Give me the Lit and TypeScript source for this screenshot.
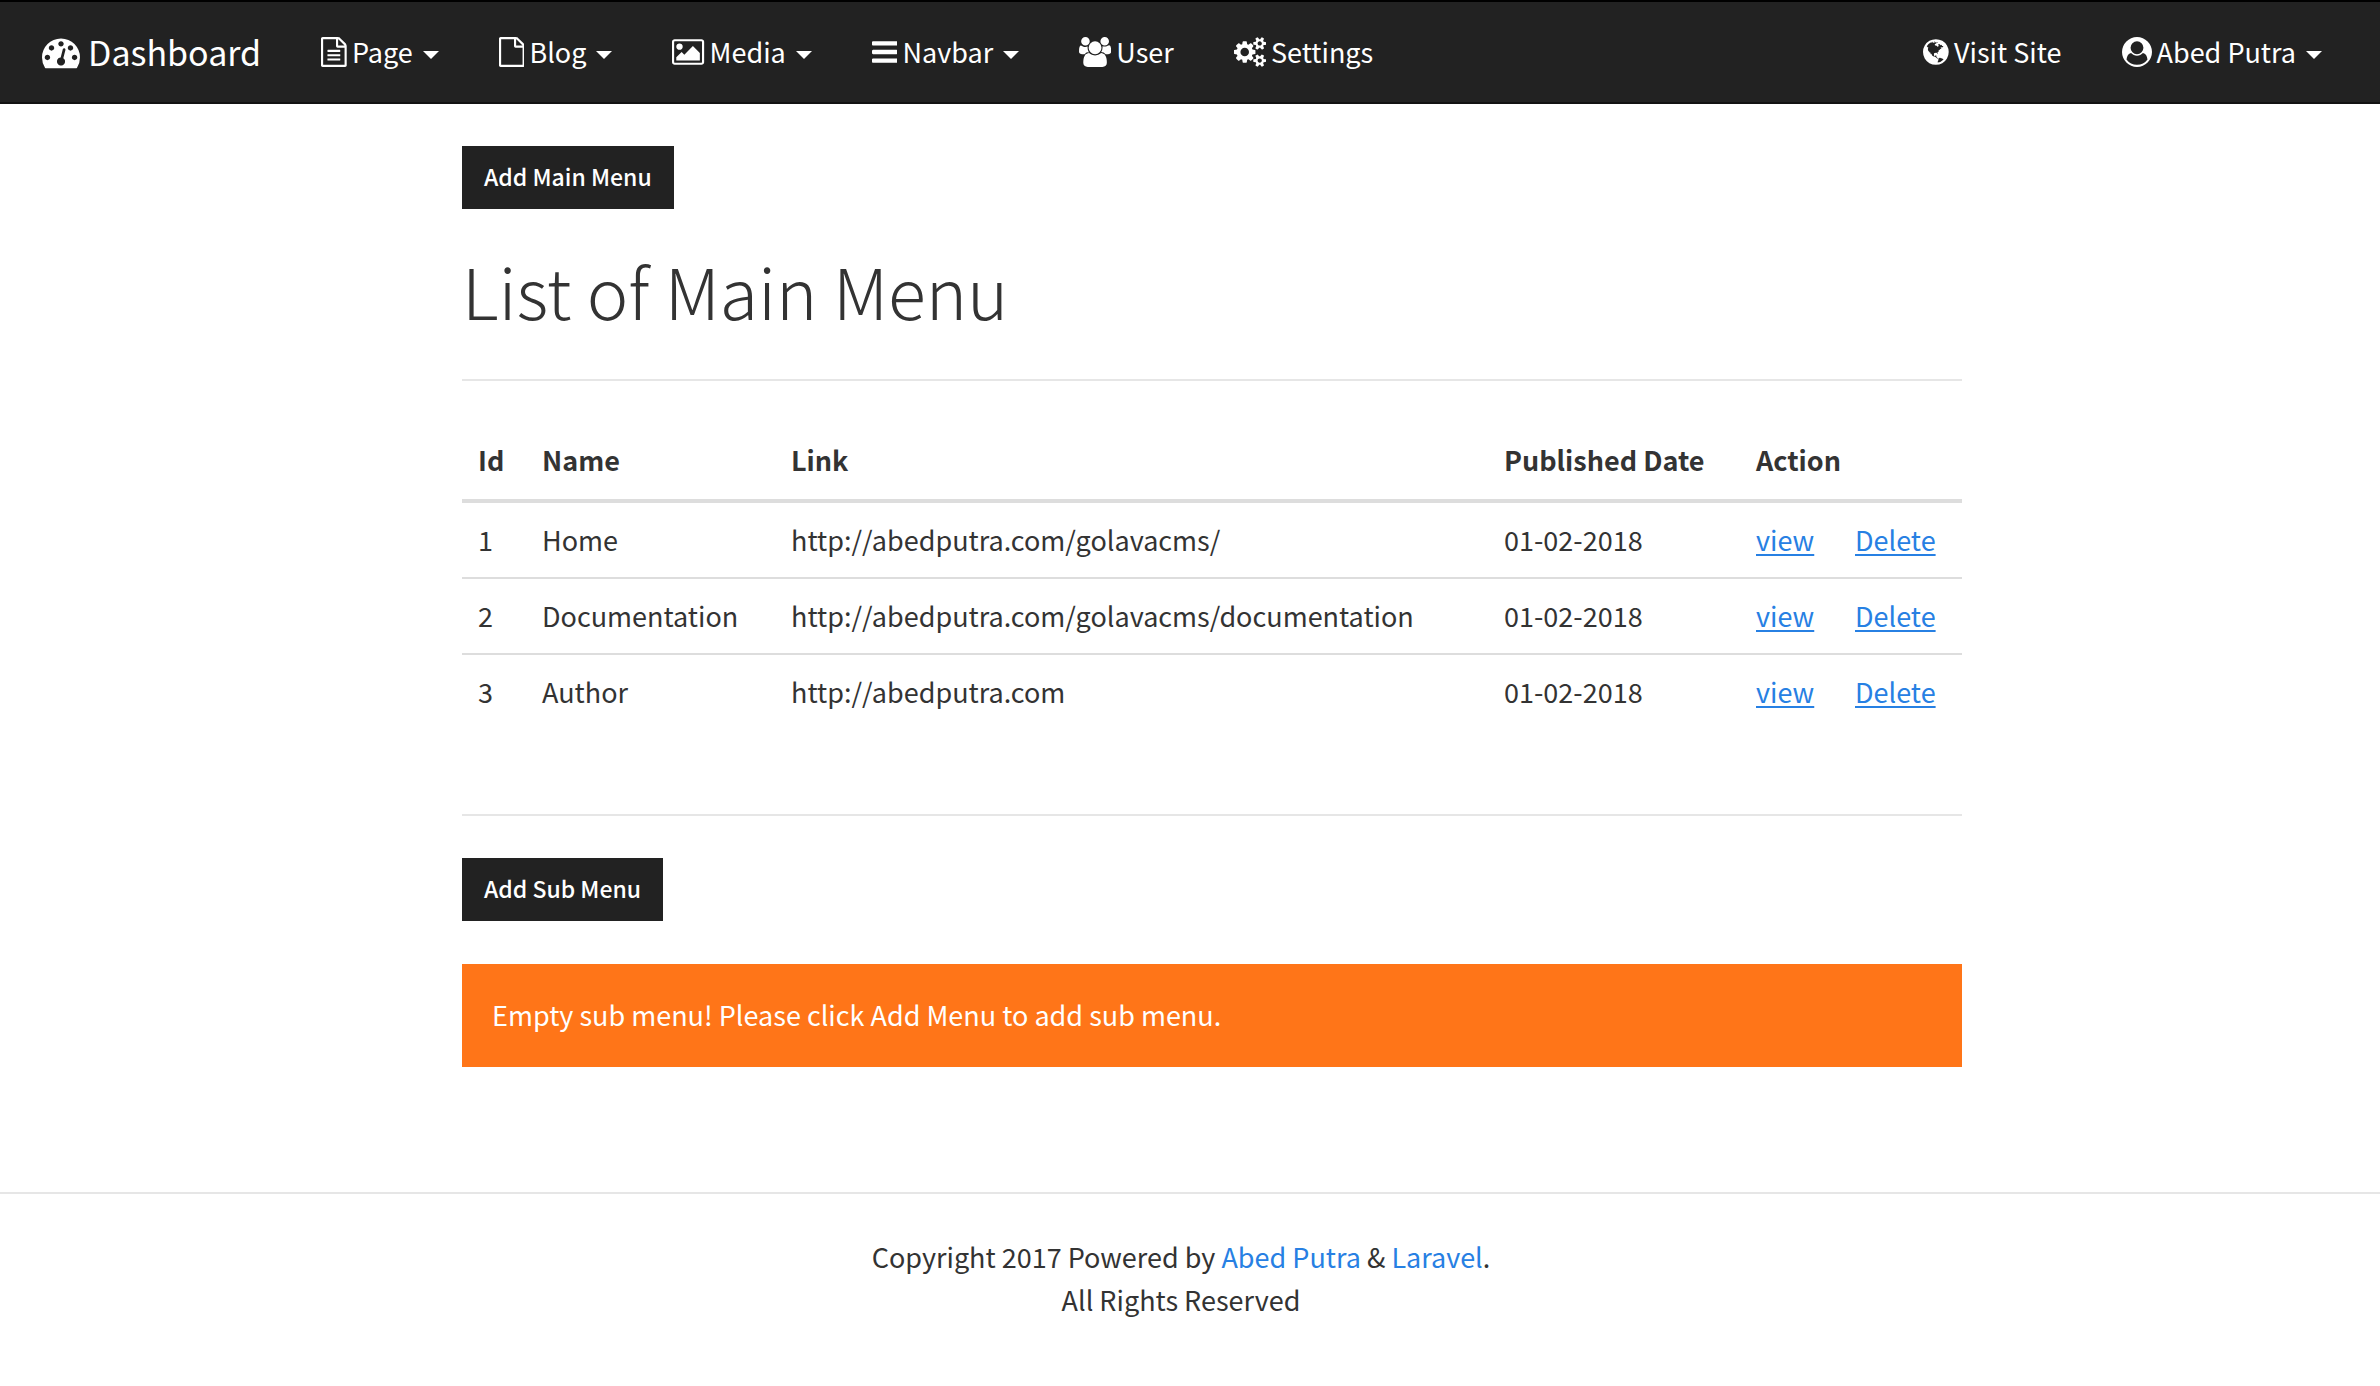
import { LitElement, html, css, svg } from "lit";
import { customElement, property } from "lit/decorators.js";

interface Glyph {
  box: string;
  path: string;
}

/* Glyphs share a 1792-unit em height; the box holds each one's own advance width. */
const GLYPHS: Record<string, Glyph> = {
  dashboard: {
    box: "0 0 1792 1792",
    path: "M384 1152q0-53-37.5-90.5t-90.5-37.5-90.5 37.5-37.5 90.5 37.5 90.5 90.5 37.5 90.5-37.5 37.5-90.5zm192-448q0-53-37.5-90.5t-90.5-37.5-90.5 37.5-37.5 90.5 37.5 90.5 90.5 37.5 90.5-37.5 37.5-90.5zm428 481l101-382q6-26-7.5-48.5t-38.5-29.5-48 6.5-30 39.5l-101 382q-60 5-107 43.5t-63 98.5q-20 77 20 146t117 89 146-20 89-117q16-60-6-117t-72-91zm660-33q0-53-37.5-90.5t-90.5-37.5-90.5 37.5-37.5 90.5 37.5 90.5 90.5 37.5 90.5-37.5 37.5-90.5zm-640-640q0-53-37.5-90.5t-90.5-37.5-90.5 37.5-37.5 90.5 37.5 90.5 90.5 37.5 90.5-37.5 37.5-90.5zm448 192q0-53-37.5-90.5t-90.5-37.5-90.5 37.5-37.5 90.5 37.5 90.5 90.5 37.5 90.5-37.5 37.5-90.5zm320 448q0 261-141 483-19 29-54 29h-1402q-35 0-54-29-141-221-141-483 0-182 71-348t191-286 286-191 348-71 348 71 286 191 191 286 71 348z",
  },
  page: {
    box: "128 0 1536 1792",
    path: "M1596 380q28 28 48 76t20 88v1152q0 40-28 68t-68 28h-1344q-40 0-68-28t-28-68v-1600q0-40 28-68t68-28h896q40 0 88 20t76 48zm-444-244v376h376q-10-29-22-41l-313-313q-12-12-41-22zm384 1528v-1024h-416q-40 0-68-28t-28-68v-416h-768v1536h1280zm-1024-864q0-14 9-23t23-9h704q14 0 23 9t9 23v64q0 14-9 23t-23 9h-704q-14 0-23-9t-9-23v-64zm736 224q14 0 23 9t9 23v64q0 14-9 23t-23 9h-704q-14 0-23-9t-9-23v-64q0-14 9-23t23-9h704zm0 256q14 0 23 9t9 23v64q0 14-9 23t-23 9h-704q-14 0-23-9t-9-23v-64q0-14 9-23t23-9h704z",
  },
  blog: {
    box: "128 0 1536 1792",
    path: "M1596 380q28 28 48 76t20 88v1152q0 40-28 68t-68 28h-1344q-40 0-68-28t-28-68v-1600q0-40 28-68t68-28h896q40 0 88 20t76 48zm-444-244v376h376q-10-29-22-41l-313-313q-12-12-41-22zm384 1528v-1024h-416q-40 0-68-28t-28-68v-416h-768v1536h1280z",
  },
  media: {
    box: "-64 0 1920 1792",
    path: "M576 576q0 80-56 136t-136 56-136-56-56-136 56-136 136-56 136 56 56 136zm1024 384v448h-1408v-192l320-320 160 160 512-512zm96-704h-1600q-13 0-22.5 9.5t-9.5 22.5v1216q0 13 9.5 22.5t22.5 9.5h1600q13 0 22.5-9.5t9.5-22.5v-1216q0-13-9.5-22.5t-22.5-9.5zm160 32v1216q0 66-47 113t-113 47h-1600q-66 0-113-47t-47-113v-1216q0-66 47-113t113-47h1600q66 0 113 47t47 113z",
  },
  navbar: {
    box: "128 0 1536 1792",
    path: "M1664 1344v128q0 26-19 45t-45 19h-1408q-26 0-45-19t-19-45v-128q0-26 19-45t45-19h1408q26 0 45 19t19 45zm0-512v128q0 26-19 45t-45 19h-1408q-26 0-45-19t-19-45v-128q0-26 19-45t45-19h1408q26 0 45 19t19 45zm0-512v128q0 26-19 45t-45 19h-1408q-26 0-45-19t-19-45v-128q0-26 19-45t45-19h1408q26 0 45 19t19 45z",
  },
  user: {
    box: "-64 0 1920 1792",
    path: "M529 896q-162 5-265 128h-134q-82 0-138-40.5t-56-118.5q0-353 124-353 6 0 43.5 21t97.5 42.5 119 21.5q67 0 133-23-5 37-5 66 0 159 81 280zm1071 637q0 120-73 189.5t-194 69.5h-874q-121 0-194-69.5t-73-189.5q0-53 3.5-103.5t14-109 26.5-108.5 43-97.5 62-81 85.5-53.5 111.5-20q10 0 43 21.5t73 48 107 48 135 21.5 135-21.5 107-48 73-48 43-21.5q61 0 111.5 20t85.5 53.5 62 81 43 97.5 26.5 108.5 14 109 3.5 103.5zm-1024-1277q0 106-75 181t-181 75-181-75-75-181 75-181 181-75 181 75 75 181zm704 384q0 159-112.5 271.5t-271.5 112.5-271.5-112.5-112.5-271.5 112.5-271.5 271.5-112.5 271.5 112.5 112.5 271.5zm576 225q0 78-56 118.5t-138 40.5h-134q-103-123-265-128 81-121 81-280 0-29-5-66 66 23 133 23 59 0 119-21.5t97.5-42.5 43.5-21q124 0 124 353zm-128-609q0 106-75 181t-181 75-181-75-75-181 75-181 181-75 181 75 75 181z",
  },
  settings: {
    box: "-64 0 1920 1792",
    path: "M832 896q0-106-75-181t-181-75-181 75-75 181 75 181 181 75 181-75 75-181zm768 512q0-52-38-90t-90-38-90 38-38 90q0 53 37.5 90.5t90.5 37.5 90.5-37.5 37.5-90.5zm0-1024q0-52-38-90t-90-38-90 38-38 90q0 53 37.5 90.5t90.5 37.5 90.5-37.5 37.5-90.5zm-384 421v185q0 10-7 19.5t-16 10.5l-155 24q-11 35-32 76 34 48 90 115 7 11 7 20 0 12-7 19-23 30-82.5 89.5t-78.5 59.5q-11 0-21-7l-115-90q-37 19-77 31-11 108-23 155-7 24-30 24h-186q-11 0-20-7.5t-10-17.5l-23-153q-34-10-75-31l-118 89q-7 7-20 7-11 0-21-8-144-133-144-160 0-9 7-19 10-14 41-53t47-61q-23-44-35-82l-152-24q-10-1-17-9.5t-7-19.5v-185q0-10 7-19.5t16-10.5l155-24q11-35 32-76-34-48-90-115-7-11-7-20 0-12 7-20 22-30 82-89t79-59q11 0 21 7l115 90q34-18 77-32 11-108 23-154 7-24 30-24h186q11 0 20 7.5t10 17.5l23 153q34 10 75 31l118-89q8-7 20-7 11 0 21 8 144 133 144 160 0 8-7 19-12 16-42 54t-45 60q23 48 34 82l152 23q10 2 17 10.5t7 19.5zm640 533v140q0 16-149 31-12 27-30 52 51 113 51 138 0 4-4 7-122 71-124 71-8 0-46-47t-52-68q-20 2-30 2t-30-2q-14 21-52 68t-46 47q-2 0-124-71-4-3-4-7 0-25 51-138-18-25-30-52-149-15-149-31v-140q0-16 149-31 13-29 30-52-51-113-51-138 0-4 4-7 4-2 35-20t59-34 30-16q8 0 46 46.5t52 67.5q20-2 30-2t30 2q51-71 92-112l6-2q4 0 124 70 4 3 4 7 0 25-51 138 17 23 30 52 149 15 149 31zm0-1024v140q0 16-149 31-12 27-30 52 51 113 51 138 0 4-4 7-122 71-124 71-8 0-46-47t-52-68q-20 2-30 2t-30-2q-14 21-52 68t-46 47q-2 0-124-71-4-3-4-7 0-25 51-138-18-25-30-52-149-15-149-31v-140q0-16 149-31 13-29 30-52-51-113-51-138 0-4 4-7 4-2 35-20t59-34 30-16q8 0 46 46.5t52 67.5q20-2 30-2t30 2q51-71 92-112l6-2q4 0 124 70 4 3 4 7 0 25-51 138 17 23 30 52 149 15 149 31z",
  },
  globe: {
    box: "128 0 1536 1792",
    path: "M896 128q209 0 385.5 103t279.5 279.5 103 385.5-103 385.5-279.5 279.5-385.5 103-385.5-103-279.5-279.5-103-385.5 103-385.5 279.5-279.5 385.5-103zm274 521q-2 1-9.5 9.5t-13.5 9.5q2 0 4.5-5t5-11 3.5-7q6-7 22-15 14-6 52-12 34-8 51 11-2-2 9.5-13t14.5-12q3-2 15-4.5t15-7.5l2-22q-12 1-17.5-7t-6.5-21q0 2-6 8 0-7-4.5-8t-11.5 1-9 1q-10-3-15-7.5t-8-16.5-4-15q-2-5-9.5-11t-9.5-10q-1-2-2.5-5.5t-3-6.5-4-5.5-5.5-2.5-7 5-7.5 10-4.5 5q-3-2-6-1.5t-4.5 1-4.5 3-5 3.5q-3 2-8.5 3t-8.5 2q15-5-1-11-10-4-16-3 9-4 7.5-12t-8.5-14h5q-1-4-8.5-8.5t-17.5-8.5-13-6q-8-5-34-9.5t-33-.5q-5 6-4.5 10.5t4 14 3.5 12.5q1 6-5.5 13t-6.5 12q0 7 14 15.5t10 21.5q-3 8-16 16t-16 12q-5 8-1.5 18.5t10.5 16.5q2 2 1.5 4t-3.5 4.5-5.5 4-6.5 3.5l-3 2q-11 5-20.5-6t-13.5-26q-7-25-16-30-23-8-29 1-5-13-41-26-25-9-58-4 6-1 0-15-7-15-19-12 3-6 4-17.5t1-13.5q3-13 12-23 1-1 7-8.5t9.5-13.5.5-6q35 4 50-11 5-5 11.5-17t10.5-17q9-6 14-5.5t14.5 5.5 14.5 5q14 1 15.5-11t-7.5-20q12 1 3-17-5-7-8-9-12-4-27 5-8 4 2 8-1-1-9.5 10.5t-16.5 17.5-16-5q-1-1-5.5-13.5t-9.5-13.5q-8 0-16 15 3-8-11-15t-24-8q19-12-8-27-7-4-20.5-5t-19.5 4q-5 7-5.5 11.5t5 8 10.5 5.5 11.5 4 8.5 3q14 10 8 14-2 1-8.5 3.5t-11.5 4.5-6 4q-3 4 0 14t-2 14q-5-5-9-17.5t-7-16.5q7 9-25 6l-10-1q-4 0-16 2t-20.5 1-13.5-8q-4-8 0-20 1-4 4-2-4-3-11-9.5t-10-8.5q-46 15-94 41 6 1 12-1 5-2 13-6.5t10-5.5q34-14 42-7l5-5q14 16 20 25-7-4-30-1-20 6-22 12 7 12 5 18-4-3-11.5-10t-14.5-11-15-5q-16 0-22 1-146 80-235 222 7 7 12 8 4 1 5 9t2.5 11 11.5-3q9 8 3 19 1-1 44 27 19 17 21 21 3 11-10 18-1-2-9-9t-9-4q-3 5 .5 18.5t10.5 12.5q-7 0-9.5 16t-2.5 35.5-1 23.5l2 1q-3 12 5.5 34.5t21.5 19.5q-13 3 20 43 6 8 8 9 3 2 12 7.5t15 10 10 10.5q4 5 10 22.5t14 23.5q-2 6 9.5 20t10.5 23q-1 0-2.5 1t-2.5 1q3 7 15.5 14t15.5 13q1 3 2 10t3 11 8 2q2-20-24-62-15-25-17-29-3-5-5.5-15.5t-4.5-14.5q2 0 6 1.5t8.5 3.5 7.5 4 2 3q-3 7 2 17.5t12 18.5 17 19 12 13q6 6 14 19.5t0 13.5q9 0 20 10.5t17 19.5q5 8 8 26t5 24q2 7 8.5 13.5t12.5 9.5l16 8 13 7q5 2 18.5 10.5t21.5 11.5q10 4 16 4t14.5-2.5 13.5-3.5q15-2 29 15t21 21q36 19 55 11-2 1 .5 7.5t8 15.5 9 14.5 5.5 8.5q5 6 18 15t18 15q6-4 7-9-3 8 7 20t18 10q14-3 14-32-31 15-49-18 0-1-2.5-5.5t-4-8.5-2.5-8.5 0-7.5 5-3q9 0 10-3.5t-2-12.5-4-13q-1-8-11-20t-12-15q-5 9-16 8t-16-9q0 1-1.5 5.5t-1.5 6.5q-13 0-15-1 1-3 2.5-17.5t3.5-22.5q1-4 5.5-12t7.5-14.5 4-12.5-4.5-9.5-17.5-2.5q-19 1-26 20-1 3-3 10.5t-5 11.5-9 7q-7 3-24 2t-24-5q-13-8-22.5-29t-9.5-37q0-10 2.5-26.5t3-25-5.5-24.5q3-2 9-9.5t10-10.5q2-1 4.5-1.5t4.5 0 4-1.5 3-6q-1-1-4-3-3-3-4-3 7 3 28.5-1.5t27.5 1.5q15 11 22-2 0-1-2.5-9.5t-.5-13.5q5 27 29 9 3 3 15.5 5t17.5 5q3 2 7 5.5t5.5 4.5 5-.5 8.5-6.5q10 14 12 24 11 40 19 44 7 3 11 2t4.5-9.5 0-14-1.5-12.5l-1-8v-18l-1-8q-15-3-18.5-12t1.5-18.5 15-18.5q1-1 8-3.5t15.5-6.5 12.5-8q21-19 15-35 7 0 11-9-1 0-5-3t-7.5-5-4.5-2q9-5 2-16 5-3 7.5-11t7.5-10q9 12 21 2 8-8 1-16 5-7 20.5-10.5t18.5-9.5q7 2 8-2t1-12 3-12q4-5 15-9t13-5l17-11q3-4 0-4 18 2 31-11 10-11-6-20 3-6-3-9.5t-15-5.5q3-1 11.5-.5t10.5-1.5q15-10-7-16-17-5-43 12zm-163 877q206-36 351-189-3-3-12.5-4.5t-12.5-3.5q-18-7-24-8 1-7-2.5-13t-8-9-12.5-8-11-7q-2-2-7-6t-7-5.5-7.5-4.5-8.5-2-10 1l-3 1q-3 1-5.5 2.5t-5.5 3-4 3 0 2.5q-21-17-36-22-5-1-11-5.5t-10.5-7-10-1.5-11.5 7q-5 5-6 15t-2 13q-7-5 0-17.5t2-18.5q-3-6-10.5-4.5t-12 4.5-11.5 8.5-9 6.5-8.5 5.5-8.5 7.5q-3 4-6 12t-5 11q-2-4-11.5-6.5t-9.5-5.5q2 10 4 35t5 38q7 31-12 48-27 25-29 40-4 22 12 26 0 7-8 20.5t-7 21.5q0 6 2 16z",
  },
  account: {
    box: "0 0 1792 1792",
    path: "M1523 1339q-22-155-87.5-257.5t-184.5-118.5q-67 74-159.5 115.5t-195.5 41.5-195.5-41.5-159.5-115.5q-119 16-184.5 118.5t-87.5 257.5q106 150 271 237.5t356 87.5 356-87.5 271-237.5zm-243-699q0-159-112.5-271.5t-271.5-112.5-271.5 112.5-112.5 271.5 112.5 271.5 271.5 112.5 271.5-112.5 112.5-271.5zm512 256q0 182-71 347.5t-190.5 286-285.5 191.5-349 71-349-71-285.5-191.5-190.5-286-71-347.5 71-348 191-286 286-191 348-71 348 71 286 191 191 286 71 348z",
  },
};

@customElement("nav-icon")
export class NavIcon extends LitElement {
  @property() name = "";

  static styles = css`
    :host {
      display: flex;
      height: 30px;
    }
    .glyph {
      display: block;
      height: 100%;
      fill: currentColor;
    }
  `;

  render() {
    const glyph = GLYPHS[this.name];
    return html`<svg class="glyph" viewBox=${glyph.box} aria-hidden="true">
      ${svg`<path d=${glyph.path}></path>`}
    </svg>`;
  }
}

interface NavItem {
  icon: string;
  label: string;
  dropdown?: boolean;
}

const LEFT_ITEMS: NavItem[] = [
  { icon: "page", label: "Page", dropdown: true },
  { icon: "blog", label: "Blog", dropdown: true },
  { icon: "media", label: "Media", dropdown: true },
  { icon: "navbar", label: "Navbar", dropdown: true },
  { icon: "user", label: "User" },
  { icon: "settings", label: "Settings" },
];

const RIGHT_ITEMS: NavItem[] = [
  { icon: "globe", label: "Visit Site" },
  { icon: "account", label: "Abed Putra", dropdown: true },
];

const MENUS = [
  { id: 1, name: "Home", link: "http://abedputra.com/golavacms/", date: "01-02-2018" },
  { id: 2, name: "Documentation", link: "http://abedputra.com/golavacms/documentation", date: "01-02-2018" },
  { id: 3, name: "Author", link: "http://abedputra.com", date: "01-02-2018" },
];

@customElement("app-root")
export class AppRoot extends LitElement {
  static styles = css`
    :host {
      display: block;
      min-height: 100vh;
      background: #fff;
      color: #333;
      font-family: "Noto Sans CJK SC", "Open Sans", sans-serif;
      font-size: 27px;
      line-height: 43px;
    }
    a {
      color: #2780e3;
      text-decoration: none;
    }
    .navbar {
      box-sizing: border-box;
      display: flex;
      align-items: center;
      justify-content: space-between;
      min-height: 104px;
      padding: 0 58px 0 42px;
      background: #222;
      border-top: 2px solid #000;
      border-bottom: 2px solid #121212;
    }
    .group {
      display: flex;
      align-items: center;
      gap: 60px;
      margin: 0;
      padding: 0;
      list-style: none;
    }
    .item {
      display: flex;
      align-items: center;
      gap: 5px;
      padding: 0;
      border: 0;
      background: none;
      color: #fff;
      font: inherit;
      cursor: pointer;
    }
    .label {
      padding-bottom: 2px;
    }
    .brand {
      gap: 8px;
      font-size: 34px;
    }
    .brand nav-icon {
      height: 38px;
    }
    .caret {
      margin: 6px 0 0 5px;
      border-top: 8px solid currentColor;
      border-left: 8px solid transparent;
      border-right: 8px solid transparent;
    }
    .content {
      max-width: 1500px;
      margin: 0 auto;
      padding: 42px 0 82px 44px;
    }
    .button {
      display: block;
      padding: 9px 22px 11px;
      border: 0;
      background: #222;
      color: #fff;
      font: inherit;
      font-size: 23px;
      font-weight: 500;
      line-height: 43px;
      cursor: pointer;
    }
    .title {
      margin: 39px 0 47px;
      font-size: 70px;
      font-weight: 300;
      line-height: 84px;
    }
    .rule {
      height: 2px;
      margin: 0 0 42px;
      border: 0;
      background: #e6e6e6;
    }
    .menus {
      width: 100%;
      margin-bottom: 85px;
      table-layout: fixed;
      border-collapse: collapse;
      text-align: left;
    }
    .menus th,
    .menus td {
      padding: 16px;
      border-bottom: 2px solid #ddd;
      font-weight: 400;
      line-height: 42px;
    }
    .menus th {
      padding: 15px 16px 18px;
      border-bottom-width: 4px;
      font-weight: 700;
      line-height: 43px;
    }
    .menus tr:last-child td {
      border-bottom: 0;
    }
    .menus a {
      text-decoration: underline;
      text-decoration-thickness: 2px;
      text-underline-offset: 3px;
    }
    .col-id {
      width: 64px;
    }
    .col-name {
      width: 249px;
    }
    .col-date {
      width: 252px;
    }
    .col-view {
      width: 99px;
    }
    .col-delete {
      width: 123px;
    }
    .alert {
      margin: 43px 0;
      padding: 29px 30px 31px;
      background: #ff7518;
      color: #fff;
    }
    .footer {
      padding: 41px 18px 43px 0;
      border-top: 2px solid #e6e6e6;
      text-align: center;
    }
    .footer p {
      margin: 0;
    }
  `;

  private renderItem(item: NavItem) {
    return html`<li>
      ${item.dropdown
        ? html`<button class="item" type="button" aria-haspopup="true">
            <nav-icon name=${item.icon}></nav-icon><span class="label">${item.label}</span><span class="caret"></span>
          </button>`
        : html`<a class="item" href="#"><nav-icon name=${item.icon}></nav-icon><span class="label">${item.label}</span></a>`}
    </li>`;
  }

  render() {
    return html`
      <nav class="navbar">
        <div class="group">
          <a class="item brand" href="#"><nav-icon name="dashboard"></nav-icon><span class="label">Dashboard</span></a>
          <ul class="group">
            ${LEFT_ITEMS.map((item) => this.renderItem(item))}
          </ul>
        </div>
        <ul class="group">
          ${RIGHT_ITEMS.map((item) => this.renderItem(item))}
        </ul>
      </nav>
      <main class="content">
        <button class="button" type="button">Add Main Menu</button>
        <h1 class="title">List of Main Menu</h1>
        <hr class="rule" />
        <table class="menus">
          <colgroup>
            <col class="col-id" />
            <col class="col-name" />
            <col />
            <col class="col-date" />
            <col class="col-view" />
            <col class="col-delete" />
          </colgroup>
          <thead>
            <tr>
              <th scope="col">Id</th>
              <th scope="col">Name</th>
              <th scope="col">Link</th>
              <th scope="col">Published Date</th>
              <th scope="col" colspan="2">Action</th>
            </tr>
          </thead>
          <tbody>
            ${MENUS.map(
              (menu) => html`<tr>
                <td>${menu.id}</td>
                <td>${menu.name}</td>
                <td>${menu.link}</td>
                <td>${menu.date}</td>
                <td><a href="#">view</a></td>
                <td><a href="#">Delete</a></td>
              </tr>`
            )}
          </tbody>
        </table>
        <hr class="rule" />
        <button class="button" type="button">Add Sub Menu</button>
        <div class="alert" role="alert">Empty sub menu! Please click Add Menu to add sub menu.</div>
      </main>
      <footer class="footer">
        <p>Copyright 2017 Powered by <a href="#">Abed Putra</a> &amp; <a href="#">Laravel</a>.</p>
        <p>All Rights Reserved</p>
      </footer>
    `;
  }
}
